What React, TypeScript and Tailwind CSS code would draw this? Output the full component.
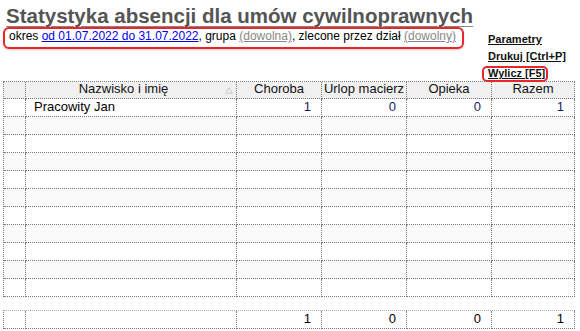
import React from "react";

const cols = "grid grid-cols-[22px_211px_85px_85px_85px_83px]";
const cell = "border-r border-b border-dotted border-[#777] h-[18px] leading-[16px] text-[13px]";

function DataRow({ gray }: { gray?: boolean }) {
  const bg = gray ? "bg-[#fafafa]" : "bg-white";
  return (
    <>
      <div className={`${cell} ${bg}`} />
      <div className={`${cell} ${bg}`} />
      <div className={`${cell} ${bg}`} />
      <div className={`${cell} ${bg}`} />
      <div className={`${cell} ${bg}`} />
      <div className={`${cell} ${bg}`} />
    </>
  );
}

export default function App() {
  const hdr = "border-r border-b border-dotted border-[#777] h-[17px] leading-[14px] text-[13px] bg-[#f0f0f0] text-center text-[#111] overflow-hidden whitespace-nowrap";
  const num = "text-right pr-[10px]";
  return (
    <div className="w-[580px] h-[331px] bg-white overflow-hidden relative" style={{ fontFamily: '"Liberation Sans", Arial, sans-serif' }}>
      <div className="flex h-[81px]">
        <div className="w-[482px] pl-[3px] flex flex-col">
          <div className="h-[27px] pl-[3px] pt-[3px] text-[20.5px] leading-[26px] font-bold text-[#555] underline decoration-[#888] decoration-1 underline-offset-[3px] whitespace-nowrap">
            Statystyka absencji dla umów cywilnoprawnych
          </div>
          <div className="w-[461px] h-[22px] border-2 border-[#e5262b] rounded-[6px] pl-[4px] text-[12px] leading-[14px] text-black whitespace-nowrap shadow-[0_1px_2px_rgba(200,0,0,0.25)]">
            okres{" "}
            <span className="text-[#0000ee] underline">od 01.07.2022 do 31.07.2022</span>, grupa{" "}
            <span className="text-[#888] underline">(dowolna)</span>, zlecone przez dział{" "}
            <span className="text-[#888] underline">(dowolny)</span>
          </div>
        </div>
        <div className="pt-[31px] flex flex-col pl-[6px] text-[11px] font-bold leading-[17px] text-[#111]">
          <span className="underline">Parametry</span>
          <span className="underline">Drukuj [Ctrl+P]</span>
          <span className="relative">
            <span className="underline">Wylicz [F5]</span>
            <span className="absolute left-[-6px] top-[1px] w-[66px] h-[16px] border-2 border-[#e5262b] rounded-[5px] z-10" />
          </span>
        </div>
      </div>

      <div className={`${cols} ml-[3px] w-[572px] border-l border-t border-dotted border-[#777]`}>
        <div className={hdr} />
        <div className={`${hdr} pr-[15px] relative`}>
          Nazwisko i imię
          <svg className="absolute right-[3px] top-[5px]" width="8" height="7" viewBox="0 0 8 7">
            <path d="M4 0.8 L7.3 6.2 L0.7 6.2 Z" fill="none" stroke="#c9c9c9" strokeWidth="1" />
          </svg>
        </div>
        <div className={hdr}>Choroba</div>
        <div className={hdr}>Urlop macierz</div>
        <div className={hdr}>Opieka</div>
        <div className={hdr}>Razem</div>

        <div className={`${cell} bg-white`} />
        <div className={`${cell} bg-white pl-[8px] text-black`}>Pracowity Jan</div>
        <div className={`${cell} bg-white ${num} text-[#1a1a5e]`}>1</div>
        <div className={`${cell} bg-white ${num} text-[#1a1a5e]`}>0</div>
        <div className={`${cell} bg-white ${num} text-[#1a1a5e]`}>0</div>
        <div className={`${cell} bg-white ${num} text-[#1a1a5e]`}>1</div>

        <DataRow gray />
        <DataRow />
        <DataRow gray />
        <DataRow />
        <DataRow gray />
        <DataRow />
        <DataRow gray />
        <DataRow />
        <DataRow gray />
        <DataRow />
      </div>

      <div className={`${cols} ml-[3px] mt-[13px] w-[572px] border-l border-t border-dotted border-l-[#777] border-t-[#aaa]`}>
        <div className={`${cell} h-[17px]`} />
        <div className={`${cell} h-[17px]`} />
        <div className={`${cell} h-[17px] ${num} text-black`}>1</div>
        <div className={`${cell} h-[17px] ${num} text-black`}>0</div>
        <div className={`${cell} h-[17px] ${num} text-black`}>0</div>
        <div className={`${cell} h-[17px] ${num} text-black`}>1</div>
      </div>
    </div>
  );
}
